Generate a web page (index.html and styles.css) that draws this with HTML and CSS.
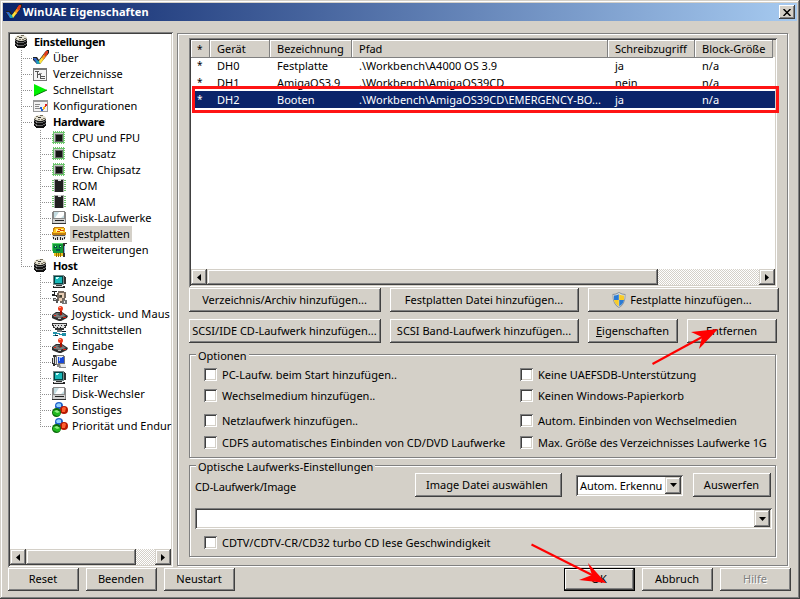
FILE: index.html
```html
<!DOCTYPE html>
<html lang="de">
    <head>
        <meta charset="utf-8">
        <title>WinUAE Eigenschaften</title>
        <link rel="stylesheet" href="styles.css">
    </head>
    <body>

        <svg class="symbols" shape-rendering="crispEdges">
            <symbol id="check" viewBox="0 0 16 16">
                <path shape-rendering="auto" d="M0 7h4l2 3 6-8 2-2h2v3L7 14H4L0 10z" fill="#222"/>
                <path shape-rendering="auto" d="M0 8h3l2 3-1 3z" fill="#36c"/>
                <path shape-rendering="auto" d="M3 10l3 1 1-1 1 3-2 1H4z" fill="#19a0b8"/>
                <path shape-rendering="auto" d="M6 11l3-4 2 2-4 5z" fill="#ffe23a"/>
                <path shape-rendering="auto" d="M9 7l3-4 2 2-4 5z" fill="#ff9a1c"/>
                <path shape-rendering="auto" d="M11 4l2-3h2v2l-3 4z" fill="#e23a1c"/>
            </symbol>
            <symbol id="stack" viewBox="0 0 16 16">
                <path d="M1 4h12v8h-1v1h-1v1H3v-1H2v-1H1z" fill="#111"/>
                <path d="M3 8h3v1H3zM3 11h3v1H3z" fill="#999"/>
                <path d="M1 6h1v1h2v1h6V7h2V6h1v1h-1v1h-2v1H4V8H2V7H1zM1 9h1v1h2v1h6v-1h2V9h1v1h-1v1h-2v1H4v-1H2v-1H1z" fill="#666"/>
                <ellipse cx="7" cy="4" rx="6" ry="3" fill="#e4e0d0"/>
                <path d="M3 2h2v1H3zM7 1h3v1H7zM10 4h2v1h-2zM5 5h2v1H5zM2 4h1v1H2zM8 5h2v1H8z" fill="#77705c"/>
                <path d="M5 3h3v1H5z" fill="#333"/>
            </symbol>
            <symbol id="dirs" viewBox="0 0 16 16">
                <path d="M0 2h14v13H0z" fill="#777"/>
                <path d="M1 4h12v10H1z" fill="#f4f4f4"/>
                <path d="M2 5h4v1H2zM4 6h1v6H4zM5 8h3v1H5zM7 9h1v4H7zM8 10h4v1H8zM8 12h4v1H8z" fill="#555"/>
                <path d="M6 7h3v1H6z" fill="#999"/>
            </symbol>
            <symbol id="play" viewBox="0 0 16 16">
                <path d="M1 2l13 6-13 6z" fill="#00f000"/>
                <path d="M1 14l13-6" stroke="#087808" fill="none"/>
            </symbol>
            <symbol id="config" viewBox="0 0 16 16">
                <path d="M0 2h15v12H0z" fill="#999"/>
                <path d="M1 4h13v9H1z" fill="#f2f2f2"/>
                <path d="M2 6h5v1H2zM2 8h4v1H2zM2 10h5v1H2z" fill="#888"/>
                <path d="M7 9h2v2h1v2H8v-2H7z" fill="#2060d8"/>
                <path d="M10 9h1V8h1v3h-1v1h-1z" fill="#ffb020"/>
                <path d="M12 6h2v2h-1v1h-1z" fill="#e02020"/>
            </symbol>
            <symbol id="chip" viewBox="0 0 16 16">
                <path d="M1 2.500h12M0 4.500h13M0 6.500h13M0 8.500h13M0 10.500h13M0 12.500h13" stroke="#6cc46c"/>
                <path d="M1.500 1v13M3.500 1v13M5.500 1v13M7.500 1v13M9.500 1v13M11.500 1v13" stroke="#6cc46c"/>
                <path d="M2 3h9v9H2z" fill="#c8c8c8"/>
                <path d="M3 4h8v8H3z" fill="#666"/>
                <path d="M4 5h6v6H4z" fill="#151515"/>
            </symbol>
            <symbol id="rom" viewBox="0 0 16 16">
                <path d="M0 2.500h14M0 4.500h14M0 6.500h14M0 8.500h14M0 10.500h14M0 12.500h14" stroke="#6cc46c"/>
                <path d="M2 1h10v13H2z" fill="#aaa"/>
                <path d="M3 2h8v12H3z" fill="#202020"/>
                <path d="M6 1h3v2H6z" fill="#ddd"/>
            </symbol>
            <symbol id="drive" viewBox="0 0 16 16">
                <path d="M1 1h12v1h1v12H0V2h1z" fill="#888"/>
                <path d="M2 2h10v6H2z" fill="#c4dde2"/>
                <path d="M7 2h5v3L9 8H3z" fill="#fff"/>
                <path d="M1 9h12v4H1z" fill="#d0d0d0"/>
                <path d="M3 10h9v1H3z" fill="#222"/>
                <path d="M0 13h14v1H0z" fill="#333"/>
            </symbol>
            <symbol id="hdd" viewBox="0 0 16 16">
                <path d="M2 1h10v1h1v4h1v3H0V6h1V2h1z" fill="#c07c10"/>
                <path d="M3 2h9l1 5H1z" fill="#ffc820"/>
                <path d="M4 3h7v3H4z" fill="#fff0a0"/>
                <path d="M6 3h3v1H6zM8 4h4v1H8zM5 5h3v1H5z" fill="#d84800"/>
                <path d="M0 9h14v3h-1v2H1v-2H0z" fill="#ddd"/>
                <path d="M1 9h12v1H1z" fill="#555"/>
                <path d="M1 11h1v2H1zM3 12h1v2H3zM5 11h1v3H5zM8 11h1v3H8zM10 12h1v2h-1zM12 11h1v2h-1z" fill="#222"/>
            </symbol>
            <symbol id="card" viewBox="0 0 16 16">
                <path d="M0 1h12v10H1V9H0z" fill="#109838"/>
                <path d="M0 1h11v1H1v7H0z" fill="#60d870"/>
                <path d="M2 4h3v2H2zM7 3h2v3H7zM4 7h4v2H4z" fill="#054"/>
                <path d="M3 4h1v1H3zM8 4h1v1H8z" fill="#bfb"/>
                <path d="M2 11h9v3H2z" fill="#e8c020"/>
                <path d="M4 11h1v4H4zM6 11h1v4H6zM8 11h1v4H8z" fill="#986c00"/>
                <path d="M11 1h4v1h-2v13h-2z" fill="#333"/>
                <path d="M12 4h1v7h-1z" fill="#8bd"/>
            </symbol>
            <symbol id="monitor" viewBox="0 0 16 16">
                <path d="M11 2h2v1h1v7h-2v1h-1z" fill="#333"/>
                <path d="M1 1h11v10H1z" fill="#788"/>
                <path d="M2 2h9v8H2z" fill="#044"/>
                <path d="M3 3h7v6H3z" fill="#18b8b8"/>
                <path d="M4 3h3v1H6v1H4z" fill="#c8ffff"/>
                <path d="M4 11h6v1H4z" fill="#333"/>
                <path d="M1 12h12v2H1z" fill="#222"/>
                <path d="M2 12h9v1H2z" fill="#ccc"/>
            </symbol>
            <symbol id="sound" viewBox="0 0 16 16">
                <path d="M0 1h5v1H3v3h2v2H4V6H2V2H0zM0 4h2v2H0z" fill="#222"/>
                <path d="M6 1h6v1h2v6h-1v3h-1v2H8v-2H6V9H5V3h1z" fill="#75695e"/>
                <path d="M7 3h5v5h-2v3H7V8h3V5H7z" fill="#e8cdb4"/>
                <path d="M8 5h2v2H8z" fill="#443"/>
                <path d="M1 8h3v1h2v4H4v-2H1z" fill="#555"/>
                <path d="M2 9h2v1H2z" fill="#ccc"/>
                <path d="M11 10h4v4h-5v-2h1z" fill="#777"/>
                <path d="M12 11h1v2h-1z" fill="#eee"/>
            </symbol>
            <symbol id="joystick" viewBox="0 0 16 16" shape-rendering="auto">
                <path d="M0 9l4-3h6l6 4-1 2-6 3H7l-5-2-2-1z" fill="#2c2c2c"/>
                <path d="M1 9l4-2h5l4 3-6 2-6-1z" fill="#7c7c7c"/>
                <path d="M5 8l3-1 3 1-3 2z" fill="#444"/>
                <path d="M8 4h2v5H8z" fill="#a01000"/>
                <circle cx="8.500" cy="2.500" r="2.500" fill="#f03818"/>
                <path d="M7 1h2v1H7z" fill="#ffa080"/>
                <path d="M2 9h2v1H2zM11 11h3v1h-3z" fill="#e02010"/>
                <path d="M6 12h3v1H6z" fill="#bbb"/>
            </symbol>
            <symbol id="ports" viewBox="0 0 16 16">
                <path d="M0 1h15v3h-1v2h-2v2H3V6H1V4H0z" fill="#333"/>
                <path d="M1 2h13v1h-1v2h-1v1H3V5H2V3H1z" fill="#ddd"/>
                <path d="M3 3h1v1H3zM6 3h1v1H6zM9 3h1v1H9zM5 5h1v1H5zM8 5h1v1H8zM12 3h1v1h-1z" fill="#222"/>
                <path d="M5 8h5v2H5z" fill="#777"/>
                <path d="M1 10h4v1h3v1h2v-1h4v3h-4v-1H7v-1H4v2H1v-1h2v-1H1z" fill="#2090a8"/>
                <path d="M3 13h3v1H3zM10 9h4v1h-4z" fill="#123"/>
            </symbol>
            <symbol id="output" viewBox="0 0 16 16">
                <path d="M1 1h3v1h1v9H3v1H1v-2H0V4h1z" fill="#333"/>
                <path d="M1 3h1v6H1zM3 3h1v7H3z" fill="#ddd"/>
                <path d="M4 1h8v1h1v9H4z" fill="#777"/>
                <path d="M5 2h6v1H5zM5 3h1v7H5z" fill="#eee"/>
                <path d="M6 3h6v6H6z" fill="#1848d8"/>
                <path d="M7 3h3v1H8v3H7z" fill="#a0c8ff"/>
                <path d="M5 11h9v3H7v-1H5z" fill="#888"/>
                <path d="M8 10h5v1h1v2H9z" fill="#e8e8e8"/>
            </symbol>
            <symbol id="balls" viewBox="0 0 16 16" shape-rendering="auto">
                <circle cx="7" cy="4" r="4" fill="#2060c8"/>
                <path d="M4 3q2-3 5-1v3H5z" fill="#90d0ff"/>
                <circle cx="12" cy="8" r="4" fill="#b81800"/>
                <path d="M10 6q2-2 4 0l-1 4h-3z" fill="#ff6030"/>
                <circle cx="4.500" cy="10.500" r="4.500" fill="#0a6a0a"/>
                <path d="M1 9l3-1 4 2v3l-3 1-4-2z" fill="#20b820"/>
                <path d="M2 9l3-1 3 2-3 1z" fill="#90f080"/>
            </symbol>
            <symbol id="shield" viewBox="0 0 16 16" shape-rendering="auto">
                <path d="M8 0q3 2 6.500 2Q15 12 8 16 1 12 1.500 2 5 2 8 0z" fill="#8a929a"/>
                <path d="M8 1q3 2 5.700 2Q14 11 8 15 2 11 2.300 3 5 3 8 1z" fill="#dfe6ea"/>
                <path d="M7.800 2.200V8H3Q2.700 6 3 3.600 5.500 3.500 7.800 2.200zM8.200 8H13q-.6 4-4.800 6.200z" fill="#2a7ad4"/>
                <path d="M8.200 2.200V8H13q.3-2 0-4.400-2.500-.1-4.800-1.400zM7.800 8H3q.6 4 4.800 6.200z" fill="#f8cc28"/>
            </symbol>
        </svg>

        <div class="window">
            <header class="titlebar">
                <svg class="icon"><use href="#check"/></svg>
                <h1>WinUAE Eigenschaften</h1>
                <button class="close"><svg viewBox="0 0 8 7"><path d="M.5 0L7.500 7M7.500 0L.5 7"/></svg></button>
            </header>

            <main class="content">
                <nav class="tree">
                    <ul>
                        <li><svg class="icon"><use href="#stack"/></svg><b>Einstellungen</b></li>
                        <li><i class="tee"></i><svg class="icon"><use href="#check"/></svg><span>Über</span></li>
                        <li><i class="tee"></i><svg class="icon"><use href="#dirs"/></svg><span>Verzeichnisse</span></li>
                        <li><i class="tee"></i><svg class="icon"><use href="#play"/></svg><span>Schnellstart</span></li>
                        <li><i class="tee"></i><svg class="icon"><use href="#config"/></svg><span>Konfigurationen</span></li>
                        <li><i class="tee"></i><svg class="icon"><use href="#stack"/></svg><b>Hardware</b></li>
                        <li><i class="line"></i><i class="tee"></i><svg class="icon"><use href="#chip"/></svg><span>CPU und FPU</span></li>
                        <li><i class="line"></i><i class="tee"></i><svg class="icon"><use href="#chip"/></svg><span>Chipsatz</span></li>
                        <li><i class="line"></i><i class="tee"></i><svg class="icon"><use href="#chip"/></svg><span>Erw. Chipsatz</span></li>
                        <li><i class="line"></i><i class="tee"></i><svg class="icon"><use href="#rom"/></svg><span>ROM</span></li>
                        <li><i class="line"></i><i class="tee"></i><svg class="icon"><use href="#rom"/></svg><span>RAM</span></li>
                        <li><i class="line"></i><i class="tee"></i><svg class="icon"><use href="#drive"/></svg><span>Disk-Laufwerke</span></li>
                        <li><i class="line"></i><i class="tee"></i><svg class="icon"><use href="#hdd"/></svg><span class="current">Festplatten</span></li>
                        <li><i class="line"></i><i class="tee last"></i><svg class="icon"><use href="#card"/></svg><span>Erweiterungen</span></li>
                        <li><i class="tee last"></i><svg class="icon"><use href="#stack"/></svg><b>Host</b></li>
                        <li><i></i><i class="tee"></i><svg class="icon"><use href="#monitor"/></svg><span>Anzeige</span></li>
                        <li><i></i><i class="tee"></i><svg class="icon"><use href="#sound"/></svg><span>Sound</span></li>
                        <li><i></i><i class="tee"></i><svg class="icon"><use href="#joystick"/></svg><span class="long">Joystick- und Maus</span></li>
                        <li><i></i><i class="tee"></i><svg class="icon"><use href="#ports"/></svg><span>Schnittstellen</span></li>
                        <li><i></i><i class="tee"></i><svg class="icon"><use href="#joystick"/></svg><span>Eingabe</span></li>
                        <li><i></i><i class="tee"></i><svg class="icon"><use href="#output"/></svg><span>Ausgabe</span></li>
                        <li><i></i><i class="tee"></i><svg class="icon"><use href="#monitor"/></svg><span>Filter</span></li>
                        <li><i></i><i class="tee"></i><svg class="icon"><use href="#drive"/></svg><span>Disk-Wechsler</span></li>
                        <li><i></i><i class="tee"></i><svg class="icon"><use href="#balls"/></svg><span>Sonstiges</span></li>
                        <li><i></i><i class="tee last"></i><svg class="icon"><use href="#balls"/></svg><span>Priorität und Endur</span></li>
                    </ul>
                    <div class="scrollbar">
                        <button class="arrow"><svg viewBox="0 0 4 7"><path d="M4 0v7L0 3.500z"/></svg></button>
                        <div class="thumb"></div>
                        <button class="arrow"><svg viewBox="0 0 4 7"><path d="M0 0v7l4-3.500z"/></svg></button>
                    </div>
                </nav>

                <section class="panel">
                    <div class="list">
                        <div class="row head"><span>*</span><span>Gerät</span><span>Bezeichnung</span><span>Pfad</span><span>Schreibzugriff</span><span>Block-Größe</span></div>
                        <div class="row"><span>*</span><span>DH0</span><span>Festplatte</span><span>.\Workbench\A4000 OS 3.9</span><span>ja</span><span>n/a</span></div>
                        <div class="row"><span>*</span><span>DH1</span><span>AmigaOS3.9</span><span>.\Workbench\AmigaOS39CD</span><span>nein</span><span>n/a</span></div>
                        <div class="row selected"><span>*</span><span>DH2</span><span>Booten</span><span>.\Workbench\AmigaOS39CD\EMERGENCY-BO...</span><span>ja</span><span>n/a</span></div>
                        <div class="scrollbar">
                            <button class="arrow"><svg viewBox="0 0 4 7"><path d="M4 0v7L0 3.500z"/></svg></button>
                            <div class="thumb"></div>
                            <button class="arrow"><svg viewBox="0 0 4 7"><path d="M0 0v7l4-3.500z"/></svg></button>
                        </div>
                    </div>

                    <div class="actions">
                        <button class="btn">Verzeichnis/Archiv hinzufügen...</button>
                        <button class="btn">Festplatten Datei hinzufügen...</button>
                        <button class="btn wide"><svg class="icon"><use href="#shield"/></svg>Festplatte hinzufügen...</button>
                        <button class="btn">SCSI/IDE CD-Laufwerk hinzufügen...</button>
                        <button class="btn">SCSI Band-Laufwerk hinzufügen...</button>
                        <button class="btn"><span><u>E</u>igenschaften</span></button>
                        <button class="btn">Entfernen</button>
                    </div>

                    <div class="group options">
                        <p class="legend">Optionen</p>
                        <div class="checks">
                            <label><i class="box"></i>PC-Laufw. beim Start hinzufügen..</label>
                            <label><i class="box"></i>Keine UAEFSDB-Unterstützung</label>
                            <label><i class="box"></i>Wechselmedium hinzufügen..</label>
                            <label><i class="box"></i>Keinen Windows-Papierkorb</label>
                            <label><i class="box"></i>Netzlaufwerk hinzufügen..</label>
                            <label><i class="box"></i>Autom. Einbinden von Wechselmedien</label>
                            <label><i class="box"></i>CDFS automatisches Einbinden von CD/DVD Laufwerke</label>
                            <label class="max-size"><i class="box"></i>Max. Größe des Verzeichnisses Laufwerke 1G</label>
                        </div>
                    </div>

                    <div class="group optical">
                        <p class="legend">Optische Laufwerks-Einstellungen</p>
                        <div class="image-row">
                            <span class="image-label">CD-Laufwerk/Image</span>
                            <button class="btn choose">Image Datei auswählen</button>
                            <div class="combo type"><span>Autom. Erkennu</span><button class="arrow"><svg viewBox="0 0 7 4"><path d="M0 0h7L3.500 4z"/></svg></button></div>
                            <button class="btn eject">Auswerfen</button>
                        </div>
                        <div class="combo image"><span></span><button class="arrow"><svg viewBox="0 0 7 4"><path d="M0 0h7L3.500 4z"/></svg></button></div>
                        <label class="turbo"><i class="box"></i>CDTV/CDTV-CR/CD32 turbo CD lese Geschwindigkeit</label>
                    </div>
                </section>
            </main>

            <footer class="footer">
                <button class="btn">Reset</button>
                <button class="btn">Beenden</button>
                <button class="btn">Neustart</button>
                <button class="btn default">OK</button>
                <button class="btn">Abbruch</button>
                <button class="btn disabled">Hilfe</button>
            </footer>

            <div class="marker"></div>
            <svg class="arrows" viewBox="0 0 800 599">
                <path d="M652.500 364L704 336" />
                <path class="tip" d="M718 329L691 332l11 5-3 12z"/>
                <path d="M531.500 544.500L594 576"/>
                <path class="tip" d="M606 583L588 563l4 12-13 5z"/>
            </svg>
        </div>

    </body>
</html>
```
FILE: styles.css
```css
* {
    margin: 0;
    padding: 0;
    box-sizing: border-box;
}

body {
    font-family: "Noto Sans", "Open Sans", sans-serif;
    font-size: 11px;
    line-height: 16px;
    color: #000000;
    overflow: hidden;
}

ul { list-style: none; }
i { font-style: normal; }

button {
    font: inherit;
    letter-spacing: inherit;
    color: inherit;
    border: 0;
    border-radius: 0;
    background: #d4d0c8;
}

.symbols {
    position: absolute;
    width: 0;
    height: 0;
}
.icon {
    width: 16px;
    height: 16px;
    flex: none;
}

/* window frame */
.window {
    position: relative;
    width: 800px;
    height: 599px;
    padding: 3px;
    background: #d4d0c8;
    box-shadow: inset -1px -1px #404040, inset 1px 1px #d4d0c8, inset -2px -2px #808080, inset 2px 2px #ffffff;
    display: flex;
    flex-direction: column;
}
.titlebar {
    height: 18px;
    flex: none;
    display: flex;
    align-items: center;
    padding: 0 2px 0 3px;
    color: #ffffff;
    background: linear-gradient(to right, #0a246a, #a6caf0);
}
.titlebar h1 {
    flex: 1;
    font-size: 11px;
    letter-spacing: 0.1px;
    margin-left: 1px;
}
.close {
    width: 16px;
    height: 14px;
    display: flex;
    align-items: center;
    justify-content: center;
    box-shadow: inset -1px -1px #404040, inset 1px 1px #ffffff, inset -2px -2px #808080;
}
.close svg {
    width: 8px;
    height: 7px;
    stroke: #000000;
    stroke-width: 1.5;
}

.content {
    display: flex;
    height: 536px;
    flex: none;
    margin: 11px 8px 0 5px;
}

/* left tree */
.tree {
    width: 165px;
    height: 535px;
    padding: 2px;
    background: #ffffff;
    box-shadow: inset 1px 1px #808080, inset -1px -1px #ffffff, inset 2px 2px #404040, inset -2px -2px #d4d0c8;
    display: flex;
    flex-direction: column;
    justify-content: space-between;
}
.tree li {
    display: flex;
    height: 16px;
    padding-left: 4px;
    white-space: nowrap;
}
.tree li span,
.tree li b {
    margin-left: 2px;
    padding: 0 2px;
}
.tree li b {
    letter-spacing: -0.3px;
}
.tree li .current {
    background: #d4d0c8;
}
.tree li .long {
    padding-right: 0;
    letter-spacing: 0.1px;
}
.tree i {
    width: 19px;
    flex: none;
    background-repeat: no-repeat;
}
.tree .line,
.tree .tee {
    background-image: repeating-linear-gradient(to bottom, #909090 0 1px, transparent 1px 2px);
    background-position: 7px 0;
    background-size: 1px 16px;
}
.tree .tee {
    background-image: repeating-linear-gradient(to bottom, #909090 0 1px, transparent 1px 2px), repeating-linear-gradient(to right, #909090 0 1px, transparent 1px 2px);
    background-position: 7px 0, 7px 8px;
    background-size: 1px 16px, 12px 1px;
}
.tree .last {
    background-size: 1px 9px, 12px 1px;
}

/* scrollbars */
.scrollbar {
    height: 16px;
    display: flex;
    background: repeating-conic-gradient(#ffffff 0 25%, #d4d0c8 0 50%) 0 0 / 2px 2px;
}
.arrow,
.thumb {
    background: #d4d0c8;
    box-shadow: inset -1px -1px #404040, inset 1px 1px #d4d0c8, inset -2px -2px #808080, inset 2px 2px #ffffff;
}
.arrow {
    width: 16px;
    height: 16px;
    flex: none;
    display: flex;
    align-items: center;
    justify-content: center;
}
.scrollbar .arrow svg {
    width: 4px;
    height: 7px;
}
.scrollbar .arrow:last-child {
    margin-left: auto;
}
.tree .thumb { width: 110px; }
.list .thumb { width: 451px; }

/* right panel */
.panel {
    width: 611px;
    height: 533px;
    margin: 1px 0 0 4px;
    padding: 4px 0 0 11px;
    border: 1px solid #808080;
    box-shadow: 1px 1px #ffffff, inset 1px 1px #ffffff;
}
.list {
    width: 588px;
    height: 249px;
    padding: 2px;
    background: #ffffff;
    box-shadow: inset 1px 1px #808080, inset -1px -1px #ffffff, inset 2px 2px #404040, inset -2px -2px #d4d0c8;
    display: flex;
    flex-direction: column;
}
.list .scrollbar {
    margin-top: auto;
}
.row {
    display: grid;
    grid-template-columns: 19px 60px 82px 256px 87px 78px 1fr;
    height: 17px;
    line-height: 17px;
    white-space: nowrap;
}
.row span {
    padding-left: 7px;
}
.row span:first-child {
    padding-left: 6px;
    font-size: 10px;
}
.head {
    background: #d4d0c8;
    line-height: 18px;
}
.head span {
    box-shadow: inset -1px -1px #808080, inset 1px 1px #ffffff;
}
.selected {
    color: #ffffff;
    background: linear-gradient(to right, #ffffff 3px, #0a246a 3px);
}

.btn {
    height: 24px;
    display: flex;
    align-items: center;
    justify-content: center;
    padding-right: 1px;
    white-space: nowrap;
    box-shadow: inset -1px -1px #404040, inset 1px 1px #ffffff, inset -2px -2px #808080;
}
.btn .icon {
    margin-right: 3px;
}
.actions {
    display: grid;
    grid-template-columns: 192px 189px 90px 90px;
    column-gap: 9px;
    row-gap: 7px;
    margin-top: 1px;
}
.actions .wide {
    grid-column: 3 / 5;
    width: 191px;
    padding-right: 4px;
}

.group {
    width: 587px;
    border: 1px solid #808080;
    box-shadow: 1px 1px #ffffff, inset 1px 1px #ffffff;
}
.legend {
    width: max-content;
    height: 16px;
    margin: -7px 0 0 6px;
    padding: 0 2px;
    background: #d4d0c8;
}
.options {
    height: 104px;
    margin-top: 11px;
}
.optical {
    height: 92px;
    margin-top: 7px;
}
.checks {
    display: grid;
    grid-template-columns: 316px 1fr;
    grid-template-rows: 21px 25px 22px 16px;
    margin: 3px 0 0 14px;
}
label {
    display: flex;
    height: 16px;
    white-space: nowrap;
}
.max-size {
    letter-spacing: -0.1px;
}
.box {
    width: 13px;
    height: 13px;
    flex: none;
    margin: 1px 5px 0 0;
    background: #ffffff;
    box-shadow: inset 1px 1px #808080, inset -1px -1px #ffffff, inset 2px 2px #404040, inset -2px -2px #d4d0c8;
}

.image-row {
    display: flex;
    align-items: center;
    height: 24px;
    margin: -2px 0 0 5px;
}
.image-label {
    width: 220px;
    padding-top: 4px;
    letter-spacing: -0.15px;
}
.choose {
    width: 147px;
    padding-right: 3px;
}
.eject {
    width: 78px;
    margin-left: 10px;
}
.combo {
    display: flex;
    height: 21px;
    padding: 2px;
    background: #ffffff;
    box-shadow: inset 1px 1px #808080, inset -1px -1px #ffffff, inset 2px 2px #404040, inset -2px -2px #d4d0c8;
}
.combo span {
    flex: 1;
    padding: 1px 0 0 2px;
    overflow: hidden;
    white-space: nowrap;
}
.combo .arrow {
    height: 17px;
}
.combo .arrow svg {
    width: 7px;
    height: 4px;
}
.type {
    width: 107px;
    margin-left: 14px;
    letter-spacing: -0.1px;
}
.image {
    width: 577px;
    margin: 11px 0 0 5px;
}
.turbo {
    margin: 6px 0 0 14px;
}

/* bottom buttons */
.footer {
    display: flex;
    gap: 7px;
    margin-left: 5px;
}
.footer .btn {
    width: 71px;
    height: 23px;
    padding-bottom: 1px;
}
.footer .default {
    margin-left: auto;
    border: 1px solid #000000;
}
.footer .disabled {
    margin-right: 6px;
    color: #808080;
    text-shadow: 1px 1px #ffffff;
}

/* red annotations over the dialog */
.marker {
    position: absolute;
    left: 192px;
    top: 86px;
    width: 587px;
    height: 27px;
    border: 3px solid #ff1414;
}
.arrows {
    position: absolute;
    left: 0;
    top: 0;
    width: 800px;
    height: 599px;
    fill: none;
    stroke: #ff0000;
    stroke-width: 2;
}
.arrows .tip {
    fill: #ff0000;
    stroke: none;
}
```
